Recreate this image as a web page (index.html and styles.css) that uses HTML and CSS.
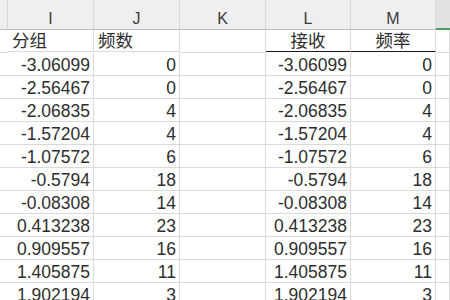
FILE: index.html
```html
<!DOCTYPE html>
<html>
<head>
<meta charset="utf-8">
<link rel="stylesheet" href="styles.css">
</head>
<body>
<div class="sheet">
  <div class="hd"></div><div class="hd">I</div><div class="hd">J</div><div class="hd">K</div><div class="hd">L</div><div class="hd">M</div><div class="hd sel"></div>

  <div class="c edge"></div><div class="c t">分组</div><div class="c t">频数</div><div class="c"></div><div class="c t ctr ul">接收</div><div class="c t ctr ul">频率</div><div class="c"></div>

  <div class="c edge"></div><div class="c n">-3.06099</div><div class="c n">0</div><div class="c"></div><div class="c n">-3.06099</div><div class="c n">0</div><div class="c"></div>
  <div class="c edge"></div><div class="c n">-2.56467</div><div class="c n">0</div><div class="c"></div><div class="c n">-2.56467</div><div class="c n">0</div><div class="c"></div>
  <div class="c edge"></div><div class="c n">-2.06835</div><div class="c n">4</div><div class="c"></div><div class="c n">-2.06835</div><div class="c n">4</div><div class="c"></div>
  <div class="c edge"></div><div class="c n">-1.57204</div><div class="c n">4</div><div class="c"></div><div class="c n">-1.57204</div><div class="c n">4</div><div class="c"></div>
  <div class="c edge"></div><div class="c n">-1.07572</div><div class="c n">6</div><div class="c"></div><div class="c n">-1.07572</div><div class="c n">6</div><div class="c"></div>
  <div class="c edge"></div><div class="c n">-0.5794</div><div class="c n">18</div><div class="c"></div><div class="c n">-0.5794</div><div class="c n">18</div><div class="c"></div>
  <div class="c edge"></div><div class="c n">-0.08308</div><div class="c n">14</div><div class="c"></div><div class="c n">-0.08308</div><div class="c n">14</div><div class="c"></div>
  <div class="c edge"></div><div class="c n">0.413238</div><div class="c n">23</div><div class="c"></div><div class="c n">0.413238</div><div class="c n">23</div><div class="c"></div>
  <div class="c edge"></div><div class="c n">0.909557</div><div class="c n">16</div><div class="c"></div><div class="c n">0.909557</div><div class="c n">16</div><div class="c"></div>
  <div class="c edge"></div><div class="c n">1.405875</div><div class="c n">11</div><div class="c"></div><div class="c n">1.405875</div><div class="c n">11</div><div class="c"></div>
  <div class="c edge"></div><div class="c n">1.902194</div><div class="c n">3</div><div class="c"></div><div class="c n">1.902194</div><div class="c n">3</div><div class="c"></div>
</div>
</body>
</html>
```

FILE: styles.css
```css
html, body {
  margin: 0;
  padding: 0;
  background: #fff;
  overflow: hidden;
}
.sheet {
  display: grid;
  grid-template-columns: 8px 86px 86px 86px 85px 85px 1fr;
  width: 450px;
  font-family: "Liberation Sans", "Noto Sans CJK SC", sans-serif;
  color: #2e2e2e;
}
.hd {
  height: 20px;
  padding-top: 9px;
  line-height: 20px;
  font-size: 16px;
  text-align: center;
  color: #3c3c3c;
  background: #efefef;
  border-right: 1px solid #d6d6d6;
  border-bottom: 1px solid #bdbdbd;
  overflow: hidden;
  white-space: nowrap;
}
.hd.sel {
  background: #e2e2e2;
  border-right: none;
  border-bottom: 2px solid #4b9e5f;
  height: 19px;
}
.c {
  height: 20px;
  padding-top: 2px;
  line-height: 20px;
  font-size: 17.5px;
  border-right: 1px solid #dadada;
  border-bottom: 1px solid #dadada;
  white-space: nowrap;
  overflow: hidden;
}
.c.edge {
  border-right: none;
}
.c.t {
  padding-left: 4px;
  height: 20px;
  padding-top: 1px;
}
.c.ctr {
  padding-left: 0;
  text-align: center;
}
.c.ul {
  border-bottom-color: #1a1a1a;
}
.c.n {
  text-align: right;
  padding-right: 3px;
}
.sheet > .c:nth-child(-n+14) {
  height: 20px;
}
```
